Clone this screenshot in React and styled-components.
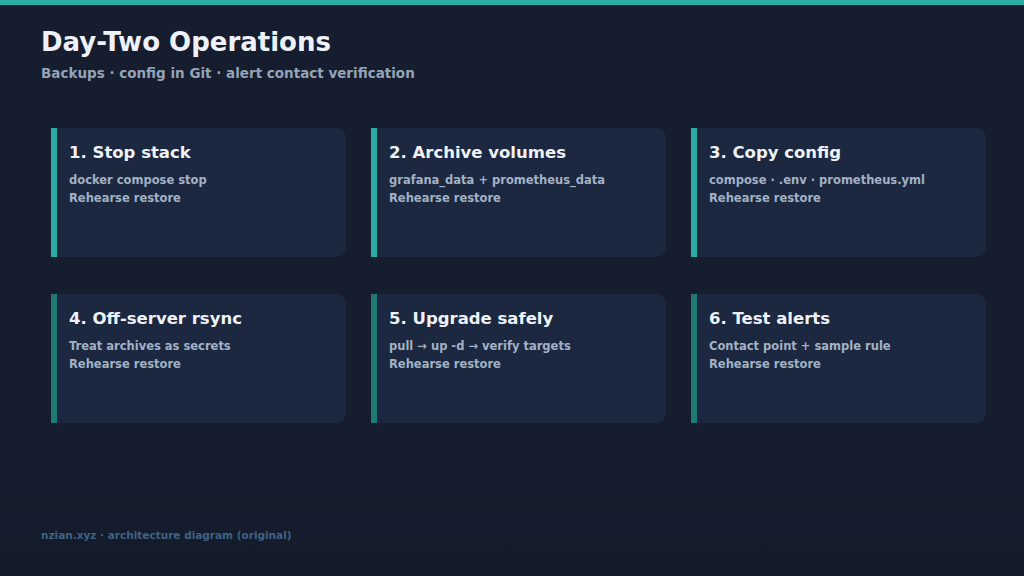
import React from "react";
import styled, { createGlobalStyle } from "styled-components";

const G = createGlobalStyle`
  html,body{margin:0;padding:0;background:#151d2e;}
  body{font-family:"DejaVu Sans",sans-serif;}
`;
const Page = styled.div`
  width:1024px;height:576px;box-sizing:border-box;border-top:5px solid #2aaba3;
  background:linear-gradient(#151d2e 0 75%, #141b2b 100%);
  padding:22px 41px 0;display:flex;flex-direction:column;position:relative;
`;
const Title = styled.h1`margin:0;font-size:26px;font-weight:bold;color:#eef2f8;line-height:30px;`;
const Sub = styled.div`margin-top:8px;font-size:13.5px;font-weight:bold;color:#94a3b8;`;
const Grid = styled.div`
  margin:47px 0 0 10px;display:grid;grid-template-columns:repeat(3,295px);
  column-gap:25px;row-gap:37px;
`;
const Card = styled.div`
  height:129px;background:#1b2840;border-left:6px solid ${p=>p.$c};
  border-radius:0 10px 10px 0;padding:15px 12px;box-sizing:border-box;
`;
const CT = styled.div`font-size:16.5px;font-weight:bold;color:#eef2f8;margin-bottom:9px;`;
const Line = styled.div`font-size:11.5px;font-weight:bold;color:#a3b1c6;line-height:18px;`;
const Foot = styled.div`position:absolute;left:41px;top:524px;font-size:10.5px;font-weight:bold;color:#3f6285;`;

const cards=[
["1. Stop stack","docker compose stop"],
["2. Archive volumes","grafana_data + prometheus_data"],
["3. Copy config","compose · .env · prometheus.yml"],
["4. Off-server rsync","Treat archives as secrets"],
["5. Upgrade safely","pull → up -d → verify targets"],
["6. Test alerts","Contact point + sample rule"],
];
export default function App(){
  return <Page><G/>
    <Title>Day-Two Operations</Title>
    <Sub>Backups · config in Git · alert contact verification</Sub>
    <Grid>{cards.map((c,i)=><Card key={i} $c={i<3?"#2aaba3":"#1f7a76"}>
      <CT>{c[0]}</CT><Line>{c[1]}</Line><Line>Rehearse restore</Line></Card>)}</Grid>
    <Foot>nzian.xyz · architecture diagram (original)</Foot>
  </Page>;
}
